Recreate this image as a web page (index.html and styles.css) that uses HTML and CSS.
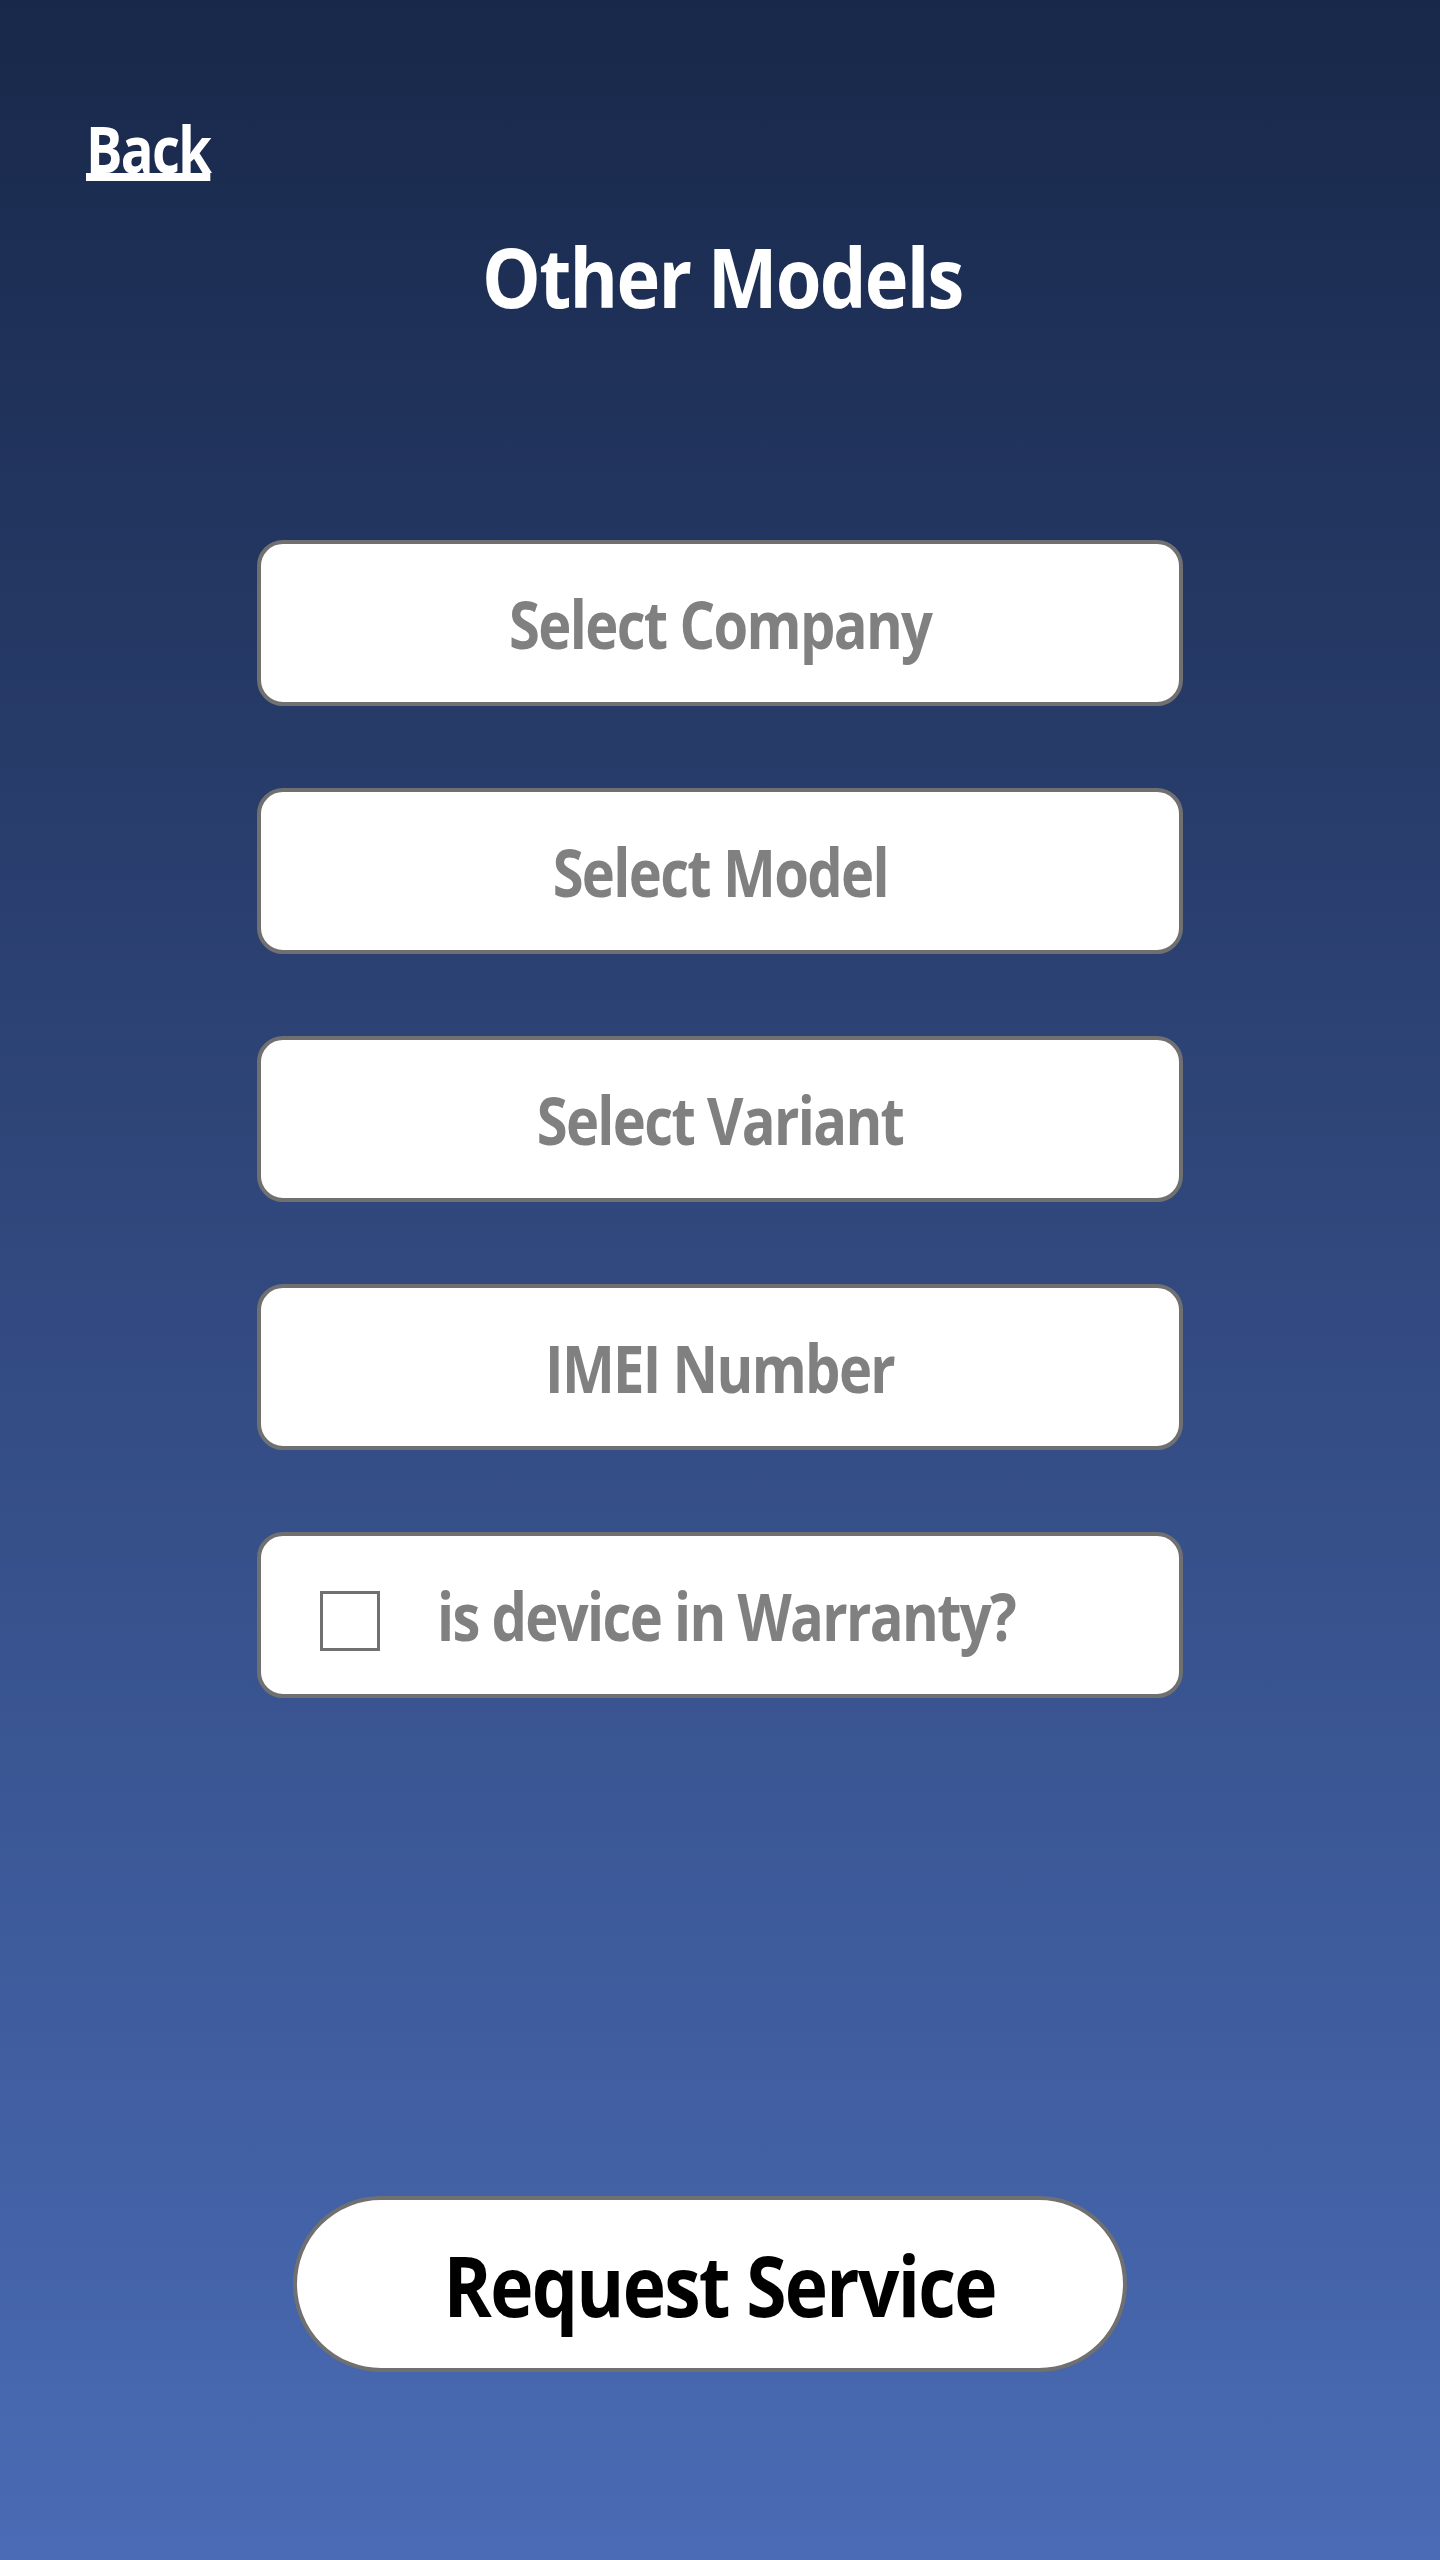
FILE: index.html
```html
<!DOCTYPE html>
<html lang="en">
<head>
<meta charset="utf-8">
<title>Other Models</title>
<link rel="stylesheet" href="styles.css">
</head>
<body>
<div class="page">
  <a class="back" href="#"><span class="back-text">Back</span></a>
  <h1 class="title"><span class="title-text">Other Models</span></h1>
  <div class="form">
    <div class="field"><span class="field-text">Select Company</span></div>
    <div class="field"><span class="field-text">Select Model</span></div>
    <div class="field"><span class="field-text">Select Variant</span></div>
    <div class="field"><span class="field-text">IMEI Number</span></div>
    <label class="field field-check"><span class="checkbox"></span><span class="field-text check-text">is device in Warranty?</span></label>
  </div>
  <button class="request" type="button"><span class="request-text">Request Service</span></button>
</div>
</body>
</html>
```

FILE: styles.css
```css
html, body {
  margin: 0;
  padding: 0;
}
body {
  font-family: "Open Sans", "Noto Sans", sans-serif;
}
.page {
  box-sizing: border-box;
  width: 1440px;
  height: 2560px;
  background: linear-gradient(180deg, #18284a 0%, #2a3f6f 35%, #3d5a9a 75%, #4a6bb5 100%);
  display: flex;
  flex-direction: column;
  align-items: center;
}
.back {
  align-self: flex-start;
  margin: 117px 0 0 86px;
  font-size: 64px;
  line-height: 64px;
  font-weight: 700;
  color: #ffffff;
  text-decoration: none;
}
.back-text {
  display: inline-block;
  letter-spacing: -2px;
  transform: scaleX(0.85);
  transform-origin: left center;
  text-decoration: underline;
  text-decoration-thickness: 8px;
  text-underline-offset: 0px;
  text-decoration-skip-ink: none;
}
.title {
  margin: 50px 0 0 4px;
  font-size: 83px;
  line-height: 90px;
  font-weight: 700;
  color: #ffffff;
}
.title-text {
  display: inline-block;
  letter-spacing: -2px;
  transform: scaleX(0.892);
}
.form {
  margin-top: 219px;
  display: flex;
  flex-direction: column;
  gap: 82px;
}
.field {
  box-sizing: border-box;
  width: 926px;
  height: 166px;
  background: #ffffff;
  border: 4px solid #707070;
  border-radius: 26px;
  display: flex;
  align-items: center;
  justify-content: center;
  font-size: 67px;
  font-weight: 700;
  color: #808080;
}
.field-text {
  display: inline-block;
  letter-spacing: -2px;
  transform: scaleX(0.837);
  white-space: nowrap;
}
.field-check {
  justify-content: flex-start;
  padding-left: 59px;
  gap: 57px;
}
.check-text {
  transform-origin: left center;
}
.checkbox {
  box-sizing: border-box;
  width: 60px;
  height: 60px;
  border: 3px solid #707070;
  margin-top: 12px;
  flex: none;
}
.request {
  margin: 498px 20px 0 0;
  box-sizing: border-box;
  width: 834px;
  height: 176px;
  background: #ffffff;
  border: 4px solid #707070;
  border-radius: 88px;
  font-family: "Open Sans", "Noto Sans", sans-serif;
  font-size: 85px;
  font-weight: 700;
  color: #000000;
  padding: 0 0 0 20px;
}
.request-text {
  display: inline-block;
  letter-spacing: -2px;
  transform: scaleX(0.861);
}
```
